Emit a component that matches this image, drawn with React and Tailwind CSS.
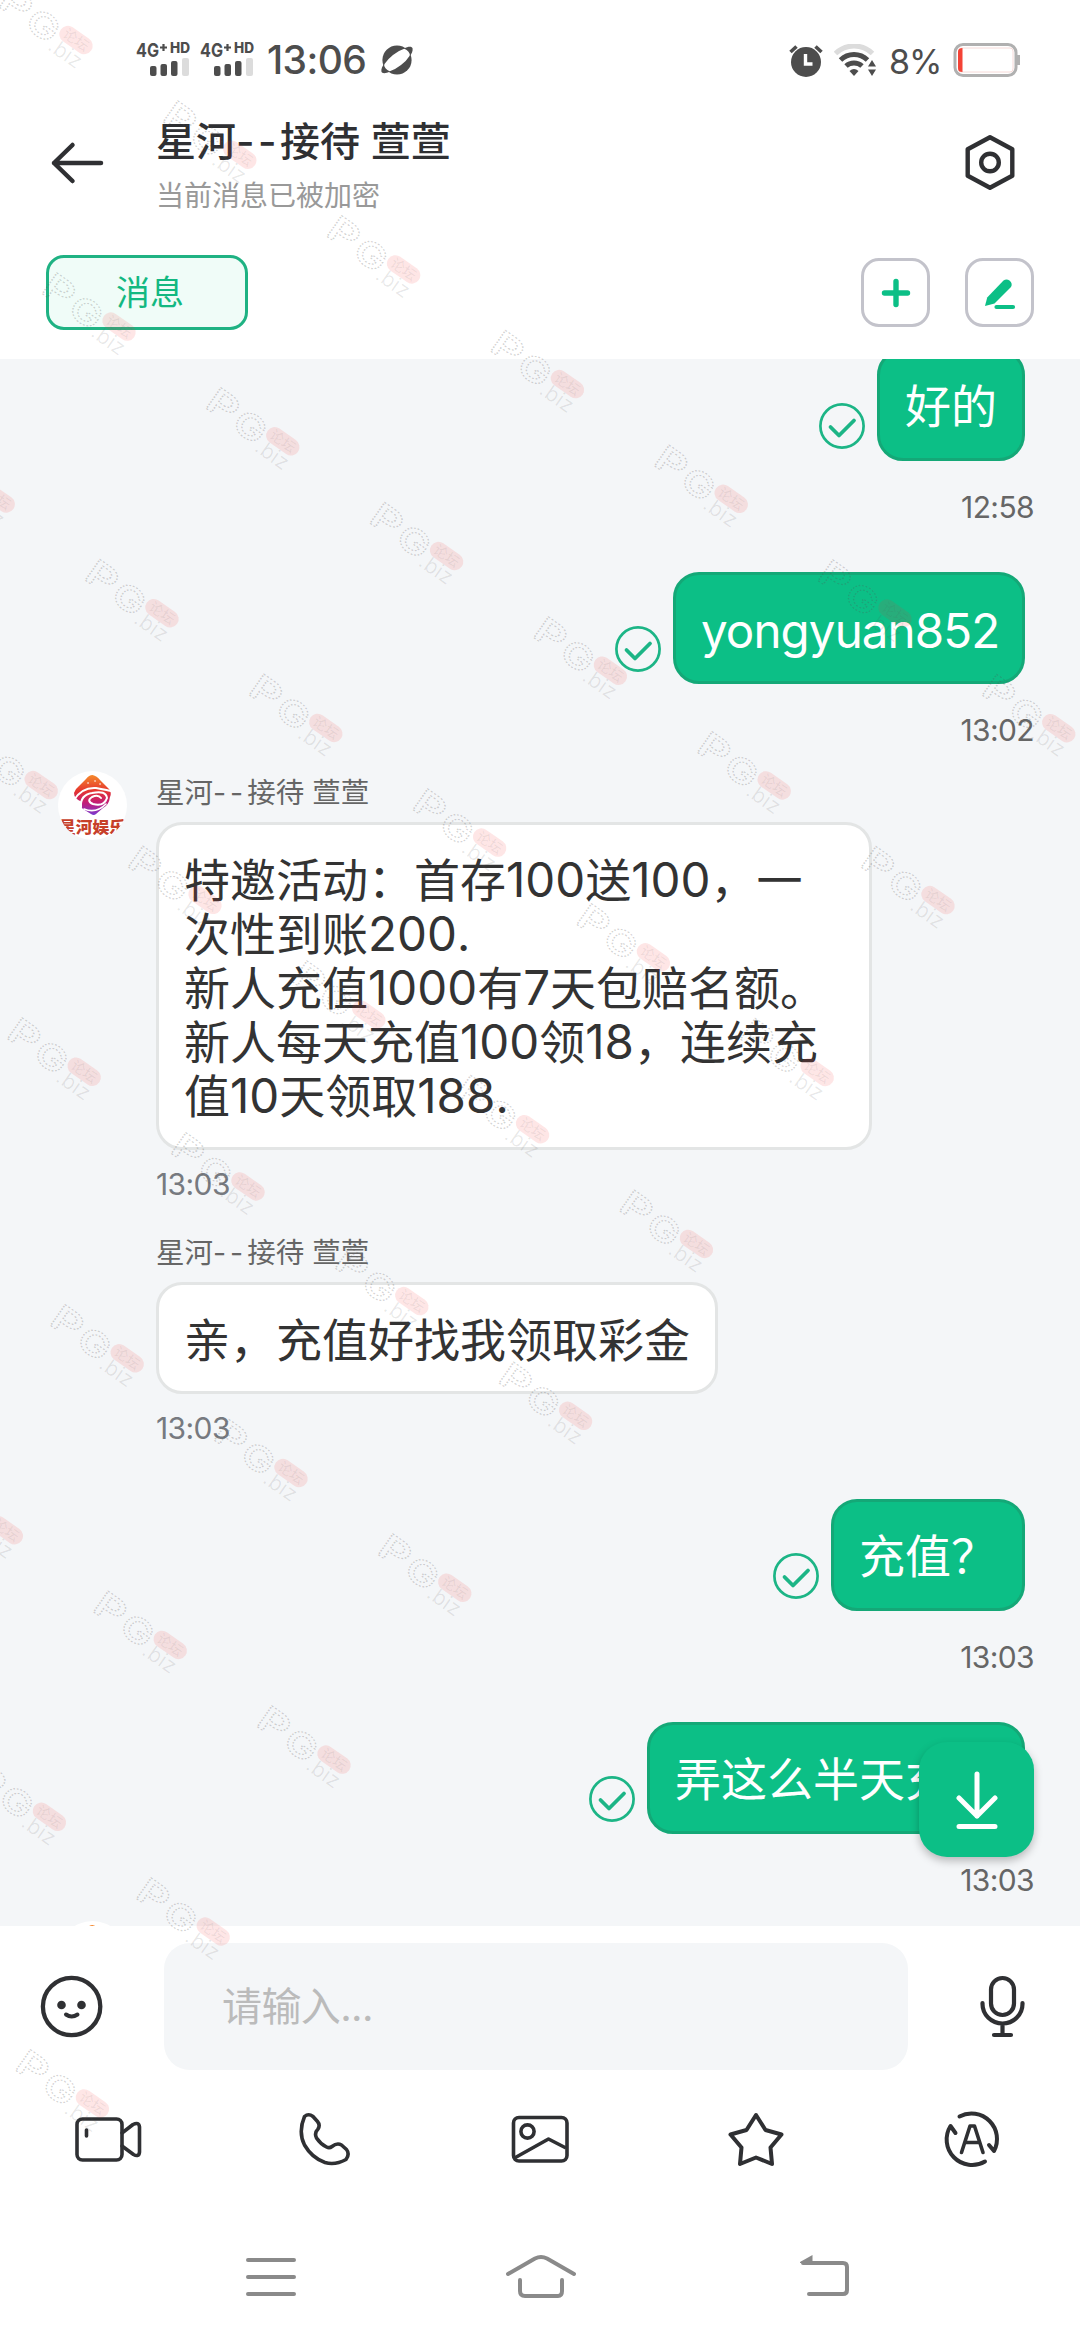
import React, { useState } from "react";
import clsx from "clsx";

const MESSAGES = [
      { id: 1, mine: true, text: "好的", time: "12:58" },
      { id: 2, mine: true, text: "yongyuan852", time: "13:02", latin: true },
      {
            id: 3,
            avatar: true,
            text: "特邀活动：首存100送100，一次性到账200.\n新人充值1000有7天包赔名额。\n新人每天充值100领18，连续充值10天领取188.",
            time: "13:03",
      },
      { id: 4, text: "亲，充值好找我领取彩金", time: "13:03" },
      { id: 5, mine: true, text: "充值？", time: "13:03" },
      { id: 6, mine: true, text: "弄这么半天充值", time: "13:03" },
];

// [row, first column, last column] of the slanted watermark grid
const MARK_ROWS = [
      [0, 0, 6],
      [1, 0, 5],
      [2, -1, 4],
      [3, -1, 3],
      [4, -1, 2],
      [5, -1, 1],
      [6, -2, 0],
      [7, -2, -1],
      [8, -2, -2],
];

function Signal() {
      return (
            <svg className="w-[56px] h-[36px] overflow-visible" viewBox="0 0 56 36" fill="#4d4d4d">
                  <text x="0" y="16" fontSize="19" fontWeight="700" textLength="23" lengthAdjust="spacingAndGlyphs">
                        4G
                  </text>
                  <path d="M24 6.500h7M27.500 3v7" stroke="#4d4d4d" strokeWidth="2.200" />
                  <text x="34" y="11.500" fontSize="14" fontWeight="800" textLength="20" lengthAdjust="spacingAndGlyphs">
                        HD
                  </text>
                  <rect x="14" y="25" width="6.500" height="10" rx="2" />
                  <rect x="24.500" y="23" width="6.500" height="12" rx="2" />
                  <rect x="35" y="20" width="6.500" height="15" rx="2" />
                  <rect x="46" y="17" width="7" height="18" rx="2" fill="#dcdcdc" />
            </svg>
      );
}

function StatusBar() {
      return (
            <div className="h-[100px] shrink-0 pl-[136px] pr-[59px] pt-[41px] flex items-start justify-between text-[#4d4d4d]">
                  <div className="flex items-start">
                        <Signal />
                        <span className="w-[8px]" />
                        <Signal />
                        <span className="w-[100px] ml-[11px] -mt-[1px] text-[39px] leading-[40px] font-medium tracking-[-0.6px] whitespace-nowrap">
                              13:06
                        </span>
                        <svg className="w-[34px] h-[32px] ml-[13px] mt-[3px]" viewBox="0 0 34 32">
                              <circle cx="17" cy="16" r="14.600" fill="#4d4d4d" />
                              <ellipse cx="17" cy="16" rx="17" ry="6.500" fill="#fff" transform="rotate(-38 17 16)" />
                              <path
                                    d="M24 4.500C28 2.500 32 2 32.600 4.500C33 7 31.500 10 30 12C30 9 28 6 24 4.500Z M10 27.500C6 29.500 2 30 1.400 27.500C1 25 2.500 22 4 20C4 23 6 26 10 27.500Z"
                                    fill="#4d4d4d"
                              />
                        </svg>
                  </div>
                  <div className="flex items-start">
                        <svg className="w-[34px] h-[34px] mt-[3px]" viewBox="0 0 34 34">
                              <circle cx="17" cy="18" r="15" fill="#4d4d4d" />
                              <path d="M1.500 8l6-5.500M32.500 8l-6-5.500" stroke="#4d4d4d" strokeWidth="3.600" />
                              <path d="M16.500 10v10h7" fill="none" stroke="#fff" strokeWidth="3.400" />
                        </svg>
                        <svg className="w-[43px] h-[34px] ml-[11px] mt-[3px]" viewBox="0 0 43 34" fill="none">
                              <path d="M1.500 9.500a26.500 26.500 0 0 1 37 0" stroke="#dcdcdc" strokeWidth="5" />
                              <path d="M6.500 16a19.500 19.500 0 0 1 27 0" stroke="#4d4d4d" strokeWidth="5" />
                              <path d="M12 22a12 12 0 0 1 16 0" stroke="#4d4d4d" strokeWidth="5" />
                              <path d="M15.500 27q4.500-4 9 0L20 32z" fill="#4d4d4d" />
                              <path d="M34 22.500l4-6.500 4 6.500zM34 25.500l4 6.500 4-6.500z" fill="#4d4d4d" />
                        </svg>
                        <span className="w-[54px] ml-[12px] mt-[2px] text-[34px] leading-[38px] whitespace-nowrap tracking-[-1px]">
                              8%
                        </span>
                        <svg className="w-[68px] h-[34px] ml-[10px] mt-[2px]" viewBox="0 0 68 34" fill="none">
                              <rect x="2" y="1.500" width="61" height="31" rx="8" stroke="#b0b0b0" strokeWidth="3" />
                              <rect x="5.500" y="5" width="54.500" height="24" rx="3" stroke="#f6dad8" />
                              <path d="M9.500 5v24c-3 0-4.500-1-4.500-4V9c0-3 1.500-4 4.500-4z" fill="#f44336" />
                              <path d="M65.500 12v10" stroke="#b0b0b0" strokeWidth="3" />
                        </svg>
                  </div>
            </div>
      );
}

function Header() {
      return (
            <div className="h-[130px] shrink-0 flex items-start pl-[50px] pr-[63px]">
                  <svg className="w-[56px] h-[44px] mt-[41px]" viewBox="0 0 56 44" fill="none" stroke="#2f3033" strokeWidth="4.500" strokeLinecap="round" strokeLinejoin="round">
                        <path d="M51 22H4M22.500 4L4 22l18.500 18" />
                  </svg>
                  <div className="flex-1 pl-[50px]">
                        <div className="mt-[17px] text-[40px] leading-[50px] font-medium text-[#2f3033] whitespace-pre">
                              星河<span className="tracking-[3.5px]">--</span>接待 萱萱
                        </div>
                        <div className="mt-[10px] text-[28px] leading-[38px] text-[#999]">当前消息已被加密</div>
                  </div>
                  <svg className="w-[54px] h-[60px] mt-[33px]" viewBox="0 0 54 60" fill="none" stroke="#2f3033" strokeWidth="4.400" strokeLinejoin="round">
                        <path d="M27 4.300L49.300 16.300V42.700L27 54.700L4.700 42.700V16.300Z" />
                        <circle cx="27" cy="29.500" r="8.800" />
                  </svg>
            </div>
      );
}

function TabRow() {
      return (
            <div className="h-[129px] shrink-0 flex items-start pt-[25px] pl-[46px] pr-[46px]">
                  <button className="w-[202px] h-[75px] pl-[6px] rounded-[18px] border-3 border-[#1fb283] bg-[#f0fcf8] text-[34px] leading-[40px] text-[#13b881]">
                        消息
                  </button>
                  <div className="ml-auto mt-[3px] flex gap-[35px]">
                        <button className="w-[69px] h-[69px] rounded-[18px] border-3 border-[#c3c3cb] flex items-center justify-center">
                              <svg className="w-[32px] h-[32px]" viewBox="0 0 32 32" stroke="#0cbf86" strokeWidth="5.400" strokeLinecap="round">
                                    <path d="M16 4.500v23M4.500 16h23" />
                              </svg>
                        </button>
                        <button className="w-[69px] h-[69px] rounded-[18px] border-3 border-[#c3c3cb] flex items-center justify-center">
                              <svg className="w-[34px] h-[34px]" viewBox="0 0 34 34">
                                    <path d="M2 30L4.200 21.500L20.500 4.500Q23.500 2.500 26.500 4.500Q30 7.500 28 11L11.500 27.500Z" fill="#0cbf86" />
                                    <path d="M13.500 31h16.500" stroke="#0cbf86" strokeWidth="4.200" strokeLinecap="round" />
                              </svg>
                        </button>
                  </div>
            </div>
      );
}

function Avatar() {
      return (
            <div className="w-[69px] h-[69px] rounded-full bg-white overflow-hidden shrink-0">
                  <svg className="w-[69px] h-[69px]" viewBox="0 0 69 69">
                        <defs>
                              <linearGradient id="logo" x1="0" y1="0" x2="0" y2="1">
                                    <stop offset="0" stopColor="#f58a2c" />
                                    <stop offset=".4" stopColor="#e5352f" />
                                    <stop offset=".7" stopColor="#c21c78" />
                                    <stop offset="1" stopColor="#7b3ad0" />
                              </linearGradient>
                        </defs>
                        <path
                              d="M34.500 4Q39 5 42 9L51 18Q54 22 52 26Q51 34 45 37L38 43Q36 45 33 43L25 38Q22 36 24 31Q16 28 16 22Q17 18 21 15L28 8Q31 4 34.500 4Z"
                              fill="url(#logo)"
                        />
                        <g fill="none" stroke="#fff" strokeLinecap="round">
                              <path d="M16 29Q24 16 38 17Q49 19 53 20" strokeWidth="2" />
                              <path d="M23 36Q22 24 34 22Q48 19 49 27Q46 36 35 33Q28 30 34 26Q40 23 43 27" strokeWidth="2" />
                              <path d="M26 38Q38 43 48 33" strokeWidth="1.600" />
                              <path d="M30 12h.1M37 10h.1M42 13h.1" strokeWidth="1.600" />
                        </g>
                        <text x="1" y="61.500" fontSize="15.500" fontWeight="900" fill="#c7402a" textLength="67" lengthAdjust="spacingAndGlyphs">
                              星河娱乐
                        </text>
                  </svg>
            </div>
      );
}

// Digits sit slightly larger than the Chinese glyphs around them
function MessageText({ text }) {
      return text.split(/(\d+)/).map((part, idx) =>
            /^\d+$/.test(part) ? (
                  <span key={idx} className="text-[47.5px]">
                        {part}
                  </span>
            ) : (
                  part
            )
      );
}

function SentMessage({ text, time, latin }) {
      return (
            <div className="h-[223px] shrink-0 pr-[46px]">
                  <div className="flex justify-end items-end pr-[9px]">
                        <svg className="w-[46px] h-[46px] mr-[12px] mb-[12px]" viewBox="0 0 46 46" fill="none" stroke="#1cb586">
                              <circle cx="23" cy="23" r="21.600" strokeWidth="2.700" />
                              <path d="M11.500 24l8.500 8.500L35 17.500" strokeWidth="3.800" strokeLinecap="round" strokeLinejoin="round" />
                        </svg>
                        <div
                              className={clsx(
                                    "h-[112px] px-[25px] rounded-[26px] border-3 border-[#14a877] bg-[#0cbf86] text-white leading-[54px] whitespace-nowrap",
                                    latin ? "w-[352px] pt-[29px] text-[47.5px] tracking-[-0.9px]" : "pt-[27px] text-[46px]"
                              )}
                        >
                              {text}
                        </div>
                  </div>
                  <div className="mt-[27px] text-right text-[30px] leading-[38px] tracking-[-0.6px] text-[#666]">{time}</div>
            </div>
      );
}

function ReceivedMessage({ text, time, avatar }) {
      return (
            <div className="flex items-start pl-[58px]">
                  <div className="w-[98px] shrink-0">{avatar && <Avatar />}</div>
                  <div>
                        <div className="h-[51px] text-[28.5px] leading-[43px] text-[#666] whitespace-pre">
                              星河<span className="tracking-[4px]">--</span>接待 萱萱
                        </div>
                        <div className="w-fit max-w-[716px] min-h-[112px] px-[25px] pt-[28px] pb-[24px] rounded-[26px] border-3 border-[#e3e5e5] bg-white text-[46px] leading-[54px] text-[#333] whitespace-pre-wrap break-all">
                              <MessageText text={text} />
                        </div>
                        <div className="mt-[15px] text-[30px] leading-[38px] tracking-[-0.6px] text-[#777a80]">{time}</div>
                  </div>
            </div>
      );
}

function Chat() {
      return (
            <div className="relative h-[1567px] shrink-0 overflow-hidden bg-[#f4f6f8] flex flex-col">
                  <div className="-mt-[10px]">
                        {MESSAGES.slice(0, 2).map((m) => (
                              <SentMessage key={m.id} {...m} />
                        ))}
                  </div>
                  <div className="-mt-[24px] h-[676px] shrink-0 flex flex-col gap-[28px]">
                        {MESSAGES.slice(2, 4).map((m) => (
                              <ReceivedMessage key={m.id} {...m} />
                        ))}
                  </div>
                  <div className="mt-[52px]">
                        {MESSAGES.slice(4).map((m) => (
                              <SentMessage key={m.id} {...m} />
                        ))}
                  </div>
                  <div className="pl-[58px] -mt-[24px]">
                        <Avatar />
                  </div>
                  {/* Jump to latest */}
                  <button className="absolute right-[46px] bottom-[69px] w-[115px] h-[115px] rounded-[28px] bg-[#0cbf86] shadow-[0_4px_8px_rgba(0,0,0,0.25)] flex items-center justify-center">
                        <svg className="w-[48px] h-[62px]" viewBox="0 0 48 62" fill="none" stroke="#fff" strokeWidth="5" strokeLinecap="round" strokeLinejoin="round">
                              <path d="M24 5v42M6 29l18 18 18-18M6 57.500h36" />
                        </svg>
                  </button>
            </div>
      );
}

function Composer() {
      const [value, setValue] = useState("");
      return (
            <div className="h-[144px] shrink-0 pt-[17px] flex items-start">
                  <svg className="w-[64px] h-[64px] ml-[40px] mt-[32px]" viewBox="0 0 64 64" fill="none" stroke="#2f3033">
                        <circle cx="31.600" cy="31.500" r="28.700" strokeWidth="4.300" />
                        <circle cx="21.500" cy="30" r="4.300" fill="#2f3033" stroke="none" />
                        <circle cx="41.500" cy="30" r="4.300" fill="#2f3033" stroke="none" />
                        <path d="M26 39.500q5.600 4 11.500 0" strokeWidth="4" strokeLinecap="round" />
                  </svg>
                  <input
                        className="w-[744px] h-[127px] ml-[60px] px-[58px] rounded-[26px] bg-[#f4f6f8] text-[40px] tracking-[-0.6px] text-[#333] placeholder:text-[#bbb] outline-none"
                        placeholder="请输入..."
                        value={value}
                        onChange={(e) => setValue(e.target.value)}
                  />
                  <svg className="w-[46px] h-[64px] ml-[72px] mt-[32px]" viewBox="0 0 46 64" fill="none" stroke="#2f3033" strokeWidth="4.200" strokeLinecap="round">
                        <rect x="11" y="3" width="23" height="37" rx="11.500" />
                        <path d="M2.500 28v1a20 19.500 0 0 0 40 0v-1M22.500 49v10M14 60h17" />
                  </svg>
            </div>
      );
}

function Toolbar() {
      return (
            <div className="h-[138px] shrink-0 grid grid-cols-5 justify-items-center items-center text-[#2f3033]">
                  <svg className="w-[68px] h-[56px]" viewBox="0 0 68 56" fill="none" stroke="currentColor" strokeWidth="3.600" strokeLinecap="round" strokeLinejoin="round">
                        <rect x="3" y="8" width="45" height="41" rx="5.500" />
                        <path d="M48 22L59 13.500Q65 10.500 65.500 16V41Q65 46.500 59.500 43.500L48 35M12.500 19v6" />
                  </svg>
                  <svg className="w-[56px] h-[56px]" viewBox="0 0 56 56" fill="none" stroke="currentColor" strokeWidth="3.600" strokeLinejoin="round">
                        <path d="M8.500 5.500Q12.500 2 17 5.500L21.500 10.500Q24.500 14 22 18Q18 22 20.500 27Q24.500 33 30.500 36Q33.500 37.500 36 35.500Q41 31.500 45.500 34L50.500 38.500Q54 43 50 48.500Q39 54.500 29 51.500Q16 47 8.500 34Q2 21 8.500 5.500Z" />
                  </svg>
                  <svg className="w-[60px] h-[56px]" viewBox="0 0 60 56" fill="none" stroke="currentColor" strokeWidth="3.600" strokeLinejoin="round">
                        <rect x="3.500" y="6.500" width="53.500" height="43.500" rx="5.500" />
                        <circle cx="17.500" cy="20.500" r="6.600" />
                        <path d="M4.500 47L38.500 28L56 37" />
                  </svg>
                  <svg className="w-[60px] h-[56px]" viewBox="0 0 60 56" fill="none" stroke="currentColor" strokeWidth="4" strokeLinejoin="round">
                        <path d="M30 4L39.500 19L55.500 23.500L44.500 36.500L46 53L30 46.500L14 53L15.500 36.500L4.500 23.500L20.500 19Z" />
                  </svg>
                  <svg className="w-[60px] h-[60px]" viewBox="0 0 60 60" fill="none" stroke="currentColor" strokeWidth="4" strokeLinecap="round" strokeLinejoin="round">
                        <path d="M17.500 7.500A25.500 25.500 0 0 1 52 42L47 36M43 52.500A25.500 25.500 0 0 1 8.500 17L13.500 24" />
                        <path d="M19.500 43.500L28 17h4.500L41 43.500M23.500 33.500h13.500" strokeWidth="3.600" />
                  </svg>
            </div>
      );
}

function NavBar() {
      return (
            <div className="h-[132px] shrink-0 flex items-start pt-[44px] pl-[244px] text-[#8a8a8a]">
                  <svg className="w-[54px] h-[50px]" viewBox="0 0 54 50" stroke="currentColor" strokeWidth="4" strokeLinecap="round">
                        <path d="M4 8h46M4 25h46M4 42h46" />
                  </svg>
                  <svg className="w-[74px] h-[50px] ml-[206px]" viewBox="0 0 74 50" fill="none" stroke="currentColor" strokeWidth="4" strokeLinecap="round" strokeLinejoin="round">
                        <path d="M4 22L31 6.500Q37 3.500 43 6.500L70 22M16 28v11q0 5 5 5h33q4 0 4-5V28" />
                  </svg>
                  <svg className="w-[54px] h-[50px] ml-[219px]" viewBox="0 0 54 50" fill="none" stroke="currentColor" strokeWidth="4" strokeLinecap="round">
                        <path d="M6 11h40q4 0 4 4v23q0 4-4 4H12" />
                        <path d="M3 10L15.500 3v8H3z" fill="currentColor" stroke="none" />
                  </svg>
            </div>
      );
}

function Watermark() {
      const marks = [];
      MARK_ROWS.forEach(([j, from, to]) => {
            for (let i = from; i <= to; i++) {
                  marks.push({ x: 76 + 163.8 * i + 43 * j, y: 40 + 114.7 * i + 286.6 * j });
            }
      });
      return (
            <svg className="absolute inset-0 w-full h-full pointer-events-none" viewBox="0 0 1080 2340">
                  {marks.map(({ x, y }) => (
                        <g key={`${x}-${y}`} transform={`translate(${x} ${y}) rotate(35)`}>
                              <g fill="none" stroke="#555" strokeOpacity=".27" strokeWidth="1.200" strokeDasharray="1.500 1.500">
                                    <text x="-85" y="17" fontSize="35" fontWeight="600" textLength="31" lengthAdjust="spacingAndGlyphs">
                                          P
                                    </text>
                                    <text x="-51" y="19" fontSize="34" fontWeight="600" textLength="32" lengthAdjust="spacingAndGlyphs">
                                          G
                                    </text>
                              </g>
                              <text x="-19" y="24" fontSize="21" fontWeight="300" fill="#555" fillOpacity=".14" textLength="36">
                                    .biz
                              </text>
                              <rect x="-18.500" y="-8.500" width="37" height="17" rx="8.500" fill="#f83030" fillOpacity=".12" />
                              <text x="0" y="5" textAnchor="middle" fontSize="14" fill="#555" fillOpacity=".1">
                                    论坛
                              </text>
                        </g>
                  ))}
            </svg>
      );
}

export default function App() {
      return (
            <div className="relative w-[1080px] h-[2340px] overflow-hidden flex flex-col bg-white font-['Inter','Noto_Sans_CJK_SC',sans-serif]">
                  <StatusBar />
                  <Header />
                  <TabRow />
                  <Chat />
                  <Composer />
                  <Toolbar />
                  <NavBar />
                  <Watermark />
            </div>
      );
}
